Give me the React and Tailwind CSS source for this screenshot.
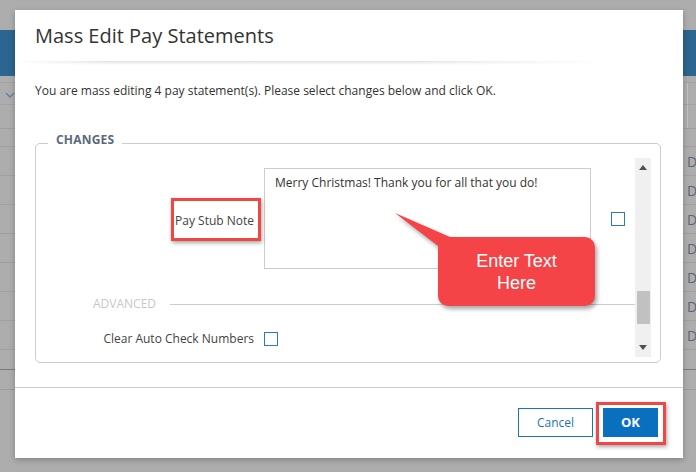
export default function App() {
  const rows = [0, 1, 2, 3, 4, 5, 6];

  return (
    <div className="relative h-[472px] w-[696px] overflow-hidden bg-[#adadad] font-['Open_Sans',sans-serif]">
      {/* page behind the dimmed overlay */}
      <div className="pt-[30px]">
        <div className="h-[46px] bg-[#2b6590]" />
        <div className="h-[6px]" />
        <div className="flex h-[22px] items-center border-t border-[#a3a3a3] pl-[5px]">
          <svg width="10" height="6" viewBox="0 0 10 6" className="mt-[2px]">
            <path d="M1 1l4 4 4-4" fill="none" stroke="#5b7fa5" strokeWidth="1.3" />
          </svg>
          <div className="ml-auto h-full w-[9px] border-l border-[#c4c4c4]" />
        </div>
        <div className="flex h-[24px] justify-end border-t border-[#a3a3a3]">
          <div className="h-full w-[9px] border-l border-[#c4c4c4]" />
        </div>
        <div className="h-[18px] border-t border-[#9f9f9f]" />
        {rows.map((r) => (
          <div key={r} className="flex h-[29px] items-center border-t border-[#a0a0a0] pl-[687px]">
            <span className="text-[14px] text-[#5d6670]">D</span>
          </div>
        ))}
        <div className="h-[20px] border-t border-[#a0a0a0]" />
        <div className="h-[20px] border-t border-[#7c7c7c]" />
        <div className="border-t border-[#9c9c9c]" />
      </div>

      {/* modal */}
      <div className="absolute left-[15px] top-[10px] flex h-[448px] w-[668px] flex-col bg-white shadow-[0_2px_6px_rgba(0,0,0,0.25)]">
        <div className="flex h-[51px] items-center px-[20px] text-[20px] text-[#333]">Mass Edit Pay Statements</div>
        <div className="h-[4px] w-[620px] bg-[linear-gradient(to_bottom,#e2e2e2,#ffffff)] [mask-image:linear-gradient(to_right,transparent_0%,black_15%,black_65%,transparent_95%)]" />
        <p className="mt-[17px] px-[20px] text-[12px] leading-[18px] text-[#333]">
          You are mass editing 4 pay statement(s). Please select changes below and click OK.
        </p>

        <div className="relative ml-[20px] mr-[22px] mt-[43px] h-[220px] rounded-[5px] border border-[#cccccc] pb-[5px] pr-[9px] pt-[14px]">
          <span className="absolute left-[12px] top-[-12px] bg-white px-[8px] text-[12px] font-bold leading-[16px] tracking-[0.2px] text-[#5b6a7a]">
            CHANGES
          </span>
          <div className="flex h-full">
            <div className="flex-1">
              <div className="flex items-center pt-[10px]">
                <div className="flex w-[218px] justify-end">
                  <div className="relative">
                    <span className="text-[12px] leading-[18px] text-[#444]">Pay Stub Note</span>
                    <span className="absolute bottom-[-10px] left-[-4px] right-[-7px] top-[-9px] border-[3px] border-[#f04646] shadow-[1px_2px_4px_rgba(0,0,0,0.35)]" />
                  </div>
                </div>
                <div className="ml-[10px] h-[101px] w-[327px] border border-[#cccccc] px-[10px] pt-[5px] text-[12px] leading-[18px] text-[#333]">
                  Merry Christmas! Thank you for all that you do!
                </div>
                <div className="ml-[20px] h-[14px] w-[14px] border border-[#2a7bc4] bg-white" />
              </div>

              <div className="mt-[27px] flex items-center">
                <span className="ml-[57px] text-[12px] leading-[16px] text-[#c8c8c8]">ADVANCED</span>
                <div className="ml-[14px] h-px flex-1 bg-[#cccccc]" />
              </div>

              <div className="mt-[18px] flex items-center">
                <div className="w-[218px] text-right text-[12px] leading-[18px] text-[#444]">Clear Auto Check Numbers</div>
                <div className="ml-[10px] h-[14px] w-[14px] border border-[#2a7bc4] bg-white" />
              </div>
            </div>

            <div className="flex w-[16px] flex-col items-center bg-[#f0f0f0]">
              <svg width="8" height="5" viewBox="0 0 8 5" className="mt-[7px]">
                <path d="M0 5L4 0l4 5z" fill="#505050" />
              </svg>
              <div className="flex-1" />
              <div className="mb-[21px] h-[33px] w-[13px] bg-[#c1c1c1]" />
              <svg width="8" height="5" viewBox="0 0 8 5" className="mb-[7px]">
                <path d="M0 0l4 5 4-5z" fill="#505050" />
              </svg>
            </div>
          </div>
        </div>

        <div className="mt-[24px] border-t border-[#cccccc]" />
        <div className="flex justify-end gap-[10px] pr-[25px] pt-[20px]">
          <button className="h-[29px] w-[75px] border border-[#1a73c0] bg-white text-[12px] text-[#1a73c0]">Cancel</button>
          <div className="relative">
            <button className="h-[29px] w-[55px] bg-[#0b6fc0] text-[13px] font-bold text-white">OK</button>
            <span className="absolute bottom-[-8px] left-[-7px] right-[-8px] top-[-6px] border-[3px] border-[#f04646] shadow-[1px_2px_4px_rgba(0,0,0,0.35)]" />
          </div>
        </div>
      </div>

      {/* callout annotation */}
      <svg className="absolute left-[390px] top-[208px] drop-shadow-[2px_3px_2px_rgba(0,0,0,0.35)]" width="90" height="40" viewBox="0 0 90 40">
        <path d="M5 5L60 29 48 38z" fill="#f44447" />
      </svg>
      <div className="absolute left-[438px] top-[237px] flex h-[69px] w-[157px] flex-col items-center justify-center rounded-[10px] bg-[#f44447] font-['Liberation_Sans',Arial,sans-serif] text-[18px] leading-[22px] text-white shadow-[2px_3px_4px_rgba(0,0,0,0.35)]">
        <span>Enter Text</span>
        <span>Here</span>
      </div>
    </div>
  );
}
